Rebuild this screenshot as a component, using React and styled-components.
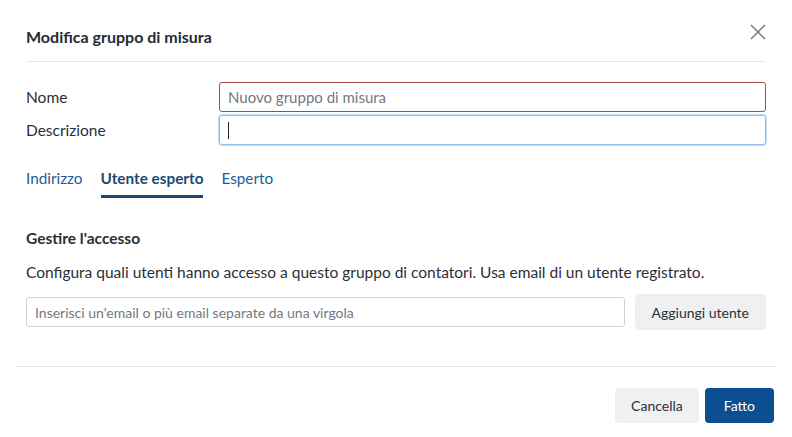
import React from 'react';
import styled, { createGlobalStyle } from 'styled-components';

const GlobalStyle = createGlobalStyle`
  html, body {
    margin: 0;
    padding: 0;
    background: #fff;
  }
  body {
    font-family: Lato, "Open Sans", sans-serif;
    color: #2b2f36;
  }
  * {
    box-sizing: border-box;
  }
`;

const Dialog = styled.div`
  width: 792px;
  height: 437px;
  padding: 0 16px;
  display: flex;
  flex-direction: column;
`;

const Header = styled.div`
  margin: 0 10px;
  height: 62px;
  padding-top: 12px;
  display: flex;
  align-items: center;
  justify-content: space-between;
  border-bottom: 1px solid #e6e6e6;
`;

const Title = styled.h2`
  margin: 0;
  font-size: 16px;
  font-weight: 700;
  color: #252b35;
`;

const CloseButton = styled.button`
  border: 0;
  background: none;
  padding: 0;
  width: 16px;
  height: 16px;
  margin-top: -10px;
  color: #7a7a7a;
  cursor: pointer;
  display: flex;
`;

const Body = styled.div`
  padding: 20px 10px 0;
  flex: 1;
`;

const FieldRow = styled.div`
  display: grid;
  grid-template-columns: 193px 1fr;
  align-items: center;
  margin-bottom: 3px;
`;

const Label = styled.label`
  font-size: 15.5px;
  color: #2b2f36;
`;

const TextInput = styled.input`
  height: 30px;
  width: 100%;
  padding: 0 8px;
  font-family: inherit;
  font-size: 15px;
  color: #2b2f36;
  border: 1px solid ${(p) => (p.$invalid ? '#a84a4a' : '#cfd3d8')};
  border-radius: 3px;
  outline: none;
  background: #fff;

  &::placeholder {
    color: #737880;
  }
`;

const FocusedBox = styled.div`
  height: 30px;
  width: 100%;
  padding: 0 8px;
  display: flex;
  align-items: center;
  border: 1px solid #8fc0ec;
  box-shadow: 0 0 0 1px #c3ddf5;
  border-radius: 3px;
`;

const Caret = styled.span`
  width: 1px;
  height: 17px;
  background: #222;
`;

const Tabs = styled.div`
  display: flex;
  gap: 18px;
  margin-top: 24px;
`;

const Tab = styled.button`
  border: 0;
  background: none;
  padding: 0 0 8px;
  font-family: inherit;
  font-size: 15.3px;
  font-weight: ${(p) => (p.$active ? 700 : 400)};
  color: ${(p) => (p.$active ? '#1b4a74' : '#235d91')};
  border-bottom: 3px solid ${(p) => (p.$active ? '#1b4a74' : 'transparent')};
  cursor: pointer;
`;

const SectionTitle = styled.h3`
  margin: 31px 0 0;
  font-size: 15.5px;
  font-weight: 700;
  color: #2b2f36;
`;

const Description = styled.p`
  margin: 16px 0 0;
  font-size: 15.5px;
  color: #2b2f36;
`;

const InviteRow = styled.div`
  display: flex;
  align-items: center;
  gap: 10px;
  margin-top: 13px;
`;

const EmailInput = styled(TextInput)`
  flex: 1;
  height: 30px;
  font-size: 14px;
`;

const Button = styled.button`
  height: ${(p) => (p.$tall ? '36px' : '35px')};
  padding: 0 ${(p) => p.$pad || '17px'};
  border: 0;
  border-radius: 4px;
  font-family: inherit;
  font-size: 14px;
  background: ${(p) => (p.$primary ? '#0b4f91' : '#eef0f2')};
  color: ${(p) => (p.$primary ? '#fff' : '#2b2f36')};
  cursor: pointer;
`;

const Footer = styled.div`
  border-top: 1px solid #e6e6e6;
  margin-bottom: 14px;
  padding: 21px 2px 0 0;
  display: flex;
  justify-content: flex-end;
  gap: 6px;
`;

const CloseIcon = () => (
  <svg width="16" height="16" viewBox="0 0 16 16" fill="none" stroke="currentColor" strokeWidth="1.5">
    <path d="M1 1L15 15M15 1L1 15" />
  </svg>
);

export default function App() {
  return (
    <>
      <GlobalStyle />
      <Dialog>
        <Header>
          <Title>Modifica gruppo di misura</Title>
          <CloseButton aria-label="Chiudi">
            <CloseIcon />
          </CloseButton>
        </Header>
        <Body>
          <FieldRow>
            <Label>Nome</Label>
            <TextInput $invalid placeholder="Nuovo gruppo di misura" />
          </FieldRow>
          <FieldRow>
            <Label>Descrizione</Label>
            <FocusedBox>
              <Caret />
            </FocusedBox>
          </FieldRow>
          <Tabs>
            <Tab>Indirizzo</Tab>
            <Tab $active>Utente esperto</Tab>
            <Tab>Esperto</Tab>
          </Tabs>
          <SectionTitle>Gestire l'accesso</SectionTitle>
          <Description>
            Configura quali utenti hanno accesso a questo gruppo di contatori. Usa email di un utente registrato.
          </Description>
          <InviteRow>
            <EmailInput placeholder="Inserisci un'email o più email separate da una virgola" />
            <Button $tall>Aggiungi utente</Button>
          </InviteRow>
        </Body>
        <Footer>
          <Button $pad="16px">Cancella</Button>
          <Button $primary $pad="19px">Fatto</Button>
        </Footer>
      </Dialog>
    </>
  );
}
